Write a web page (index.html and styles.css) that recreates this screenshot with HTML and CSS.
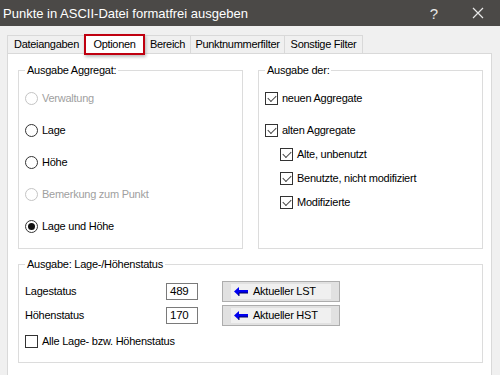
FILE: index.html
```html
<!DOCTYPE html>
<html lang="de">
<head>
    <meta charset="UTF-8">
    <title>Punkte in ASCII-Datei formatfrei ausgeben</title>
    <link rel="stylesheet" href="styles.css">
</head>
<body>
    <div class="titlebar">
        <span class="title">Punkte in ASCII-Datei formatfrei ausgeben</span>
        <span class="help">?</span>
        <svg class="close" width="12" height="12" viewBox="0 0 12 12">
            <path d="M1 1 L11 11 M11 1 L1 11" stroke="#e8e8e8" stroke-width="1.2" fill="none"/>
        </svg>
    </div>

    <div class="tabs">
        <div class="tab">Dateiangaben</div>
        <div class="tab active">Optionen</div>
        <div class="tab">Bereich</div>
        <div class="tab">Punktnummerfilter</div>
        <div class="tab">Sonstige Filter</div>
    </div>

    <div class="panel">
        <div class="top-row">
            <fieldset class="group">
                <legend>Ausgabe Aggregat:</legend>
                <div class="item disabled"><span class="radio"></span>Verwaltung</div>
                <div class="item"><span class="radio"></span>Lage</div>
                <div class="item"><span class="radio"></span>Höhe</div>
                <div class="item disabled"><span class="radio"></span>Bemerkung zum Punkt</div>
                <div class="item"><span class="radio checked"></span>Lage und Höhe</div>
            </fieldset>

            <fieldset class="group">
                <legend>Ausgabe der:</legend>
                <div class="item"><span class="check on"></span>neuen Aggregate</div>
                <div class="item"><span class="check on"></span>alten Aggregate</div>
                <div class="item sub"><span class="check on"></span>Alte, unbenutzt</div>
                <div class="item sub"><span class="check on"></span>Benutzte, nicht modifiziert</div>
                <div class="item sub"><span class="check on"></span>Modifizierte</div>
            </fieldset>
        </div>

        <fieldset class="group status">
            <legend>Ausgabe: Lage-/Höhenstatus</legend>
            <div class="status-row">
                <span class="label">Lagestatus</span>
                <span class="field">489</span>
                <span class="btn"><span class="btn-face"><svg width="15" height="9" viewBox="0 0 15 9"><path d="M0 4.5 L5 0 L5 3 L14 3 L14 6 L5 6 L5 9 Z" fill="#0000f0"/><path d="M5 9 L5 6 L14 6" stroke="#00005a" stroke-width="1" fill="none"/></svg>Aktueller LST</span></span>
            </div>
            <div class="status-row">
                <span class="label">Höhenstatus</span>
                <span class="field">170</span>
                <span class="btn"><span class="btn-face"><svg width="15" height="9" viewBox="0 0 15 9"><path d="M0 4.5 L5 0 L5 3 L14 3 L14 6 L5 6 L5 9 Z" fill="#0000f0"/><path d="M5 9 L5 6 L14 6" stroke="#00005a" stroke-width="1" fill="none"/></svg>Aktueller HST</span></span>
            </div>
            <div class="item all"><span class="check"></span>Alle Lage- bzw. Höhenstatus</div>
        </fieldset>
    </div>
</body>
</html>
```

FILE: styles.css
```css
body {
    margin: 0;
    width: 500px;
    height: 375px;
    overflow: hidden;
    background: #f0f0f0;
    font-family: "Liberation Sans", Arial, sans-serif;
    font-size: 11px;
    letter-spacing: -0.25px;
    color: #000;
}

.titlebar {
    height: 26px;
    background: #4b4947;
    color: #fff;
    display: flex;
    align-items: center;
    padding-left: 3px;
}

.title {
    font-size: 13px;
    letter-spacing: 0;
    flex: 1;
}

.help {
    font-size: 15px;
    letter-spacing: 0;
    color: #e8e8e8;
    margin-right: 34px;
}

.close {
    margin-right: 16px;
}

.tabs {
    display: flex;
    align-items: flex-end;
    margin: 7px 0 0 7px;
    height: 20px;
    position: relative;
    z-index: 1;
}

.tab {
    height: 17px;
    line-height: 17px;
    border: 1px solid #d9d9d9;
    border-bottom: none;
    margin-right: -1px;
    background: #f0f0f0;
    text-align: center;
    box-sizing: border-box;
    height: 18px;
    letter-spacing: -0.3px;
}

.tab:nth-child(1) { width: 79px; }
.tab:nth-child(3) { width: 47px; }
.tab:nth-child(4) { width: 95px; }
.tab:nth-child(5) { width: 79px; }

.tab.active {
    width: 61px;
    height: 21px;
    line-height: 17px;
    border: 2px solid #c00010;
    background: #fff;
    margin: 0 -1px -2px -1px;
    box-shadow: 1px 2px 3px rgba(0, 0, 0, 0.25);
    position: relative;
    z-index: 2;
}

.panel {
    margin-left: 7px;
    width: 485px;
    height: 330px;
    background: #fff;
    border: 1px solid #d9d9d9;
    padding: 10px 7px 0 10px;
    box-sizing: border-box;
}

.top-row {
    display: flex;
    gap: 15px;
}

.group {
    margin: 0;
    padding: 13px 0 0 6px;
    border: 1px solid #dcdcdc;
    width: 225px;
    height: 185px;
    box-sizing: border-box;
}

.group legend {
    padding: 0 2px;
    line-height: 13px;
}

.item {
    height: 16px;
    display: flex;
    align-items: center;
    margin-bottom: 16px;
}

.item.sub {
    margin-left: 15px;
}

.group .item:nth-of-type(2) {
    margin-bottom: 8px;
}

.group .item.sub {
    margin-bottom: 8px;
}

.top-row .group:first-child .item {
    margin-bottom: 16px;
}

.item.disabled {
    color: #a0a0a0;
}

.radio {
    width: 11px;
    height: 11px;
    border: 1px solid #333;
    border-radius: 50%;
    margin-right: 4px;
    display: flex;
    align-items: center;
    justify-content: center;
    background: #fff;
}

.disabled .radio {
    border-color: #c4c4c4;
}

.radio.checked::after {
    content: "";
    width: 7px;
    height: 7px;
    border-radius: 50%;
    background: #111;
}

.check {
    width: 11px;
    height: 11px;
    border: 1px solid #333;
    margin-right: 4px;
    background: #fff;
    position: relative;
}

.check.on::after {
    content: "";
    position: absolute;
    left: 2px;
    top: 0px;
    width: 7px;
    height: 4px;
    border-left: 1px solid #444;
    border-bottom: 1px solid #444;
    transform: translate(0, 2px) rotate(-45deg);
}

.group.status {
    width: 465px;
    height: 105px;
    margin-top: 9px;
    padding-top: 9px;
}

.status-row {
    display: flex;
    align-items: center;
    height: 22px;
    margin-bottom: 2px;
}

.label {
    width: 141px;
}

.field {
    width: 27px;
    height: 15px;
    line-height: 15px;
    border: 1px solid #7a7a7a;
    padding-left: 3px;
    box-sizing: content-box;
    margin-right: 24px;
    font-size: 11.5px;
}

.btn {
    width: 118px;
    height: 21px;
    border: 1px solid #adadad;
    background: #e1e1e1;
    padding: 2px 8px 2px 8px;
    box-sizing: border-box;
    display: flex;
}

.btn-face {
    flex: 1;
    background: #f0f0f0;
    display: flex;
    align-items: center;
    padding-left: 3px;
    gap: 4px;
}

.item.all {
    margin-top: 7px;
}
```
